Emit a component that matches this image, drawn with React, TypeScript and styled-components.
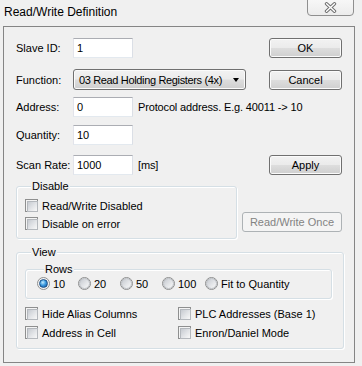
import React from "react";
import styled, { createGlobalStyle } from "styled-components";

const Global = createGlobalStyle`
  html, body { margin: 0; padding: 0; background: #f0f0f0; }
  body { font-family: "Liberation Sans", Arial, sans-serif; font-size: 11px; color: #000; }
  * { box-sizing: border-box; }
`;

const Window = styled.div`
  width: 362px;
  height: 366px;
  overflow: hidden;
  display: flex;
  flex-direction: column;
  background: #f0f0f0;
`;

const TitleBar = styled.div`
  flex: none;
  height: 26px;
  display: flex;
  justify-content: space-between;
  align-items: flex-start;
  padding-left: 4px;
`;

const Title = styled.div`
  font-size: 12px;
  line-height: 14px;
  margin-top: 5px;
`;

const CloseButton = styled.div`
  width: 47px;
  height: 17px;
  margin-right: 8px;
  margin-top: -1px;
  border: 1px solid #8f8f8f;
  border-radius: 0 0 4px 4px;
  background: linear-gradient(#f7f7f7, #ececec);
  display: flex;
  align-items: center;
  justify-content: center;
  padding-bottom: 1px;
`;

const Panel = styled.div`
  flex: none;
  margin-left: 3px;
  width: 352px;
  height: 337px;
  border: 1px solid #858585;
  padding: 11px 12px 0 12px;
  display: flex;
  flex-direction: column;
`;

const FormRow = styled.div<{ $mt: number; $h: number }>`
  display: flex;
  align-items: center;
  height: ${(p) => p.$h}px;
  margin-top: ${(p) => p.$mt}px;
`;

const FieldLabel = styled.span`
  flex: none;
  width: 57px;
`;

const TextBox = styled.input`
  flex: none;
  width: 60px;
  height: 20px;
  margin: 0;
  padding: 0 3px;
  border: 1px solid;
  border-color: #abadb3 #dbdfe6 #e3e9ef #e2e3ea;
  background: #fff;
  font-family: "Liberation Sans", Arial, sans-serif;
  font-size: 11px;
  color: #000;
  outline: none;
`;

const Hint = styled.span`
  margin-left: 5px;
  letter-spacing: -0.15px;
  white-space: nowrap;
`;

const PushButton = styled.button<{ $w: number; $mt?: number }>`
  flex: none;
  margin: ${(p) => p.$mt ?? 0}px 0 0 auto;
  width: ${(p) => p.$w}px;
  height: 20px;
  padding: 0;
  border: 1px solid #707070;
  border-radius: 3px;
  background: linear-gradient(#f2f2f2 0%, #ebebeb 48%, #dddddd 52%, #cfcfcf 100%);
  box-shadow: inset 0 0 0 1px #fbfbfb;
  font-family: "Liberation Sans", Arial, sans-serif;
  font-size: 11px;
  color: #000;
  &:disabled {
    border-color: #adb2b5;
    background: #f4f4f4;
    box-shadow: none;
    color: #838383;
  }
`;

const Combo = styled.div`
  flex: none;
  width: 173px;
  height: 21px;
  border: 1px solid #707070;
  border-radius: 3px;
  background: linear-gradient(#f2f2f2 0%, #ebebeb 48%, #dddddd 52%, #cfcfcf 100%);
  box-shadow: inset 0 0 0 1px #fbfbfb;
  display: flex;
  align-items: center;
  padding: 0 6px 0 5px;
`;

const ComboText = styled.span`
  flex: 1;
  white-space: nowrap;
  letter-spacing: -0.35px;
`;

const ComboArrow = styled.span`
  width: 0;
  height: 0;
  border-left: 3.5px solid transparent;
  border-right: 3.5px solid transparent;
  border-top: 4px solid #000;
`;

const Section = styled.div`
  display: flex;
  align-items: flex-start;
  gap: 5px;
  margin-top: 5px;
`;

const Group = styled.fieldset<{ $w: number; $mt?: number; $pad: string }>`
  flex: none;
  width: ${(p) => p.$w}px;
  margin: ${(p) => p.$mt ?? 0}px 0 0 0;
  padding: ${(p) => p.$pad};
  border: 1px solid #d5dfe5;
  border-radius: 3px;
  box-shadow: inset 1px 1px 0 #ffffff, 1px 1px 0 #ffffff;
  min-width: 0;
`;

const Legend = styled.legend<{ $ml: number }>`
  padding: 0 1px;
  margin-left: ${(p) => p.$ml}px;
  line-height: 13px;
  background: #f0f0f0;
`;

const Stack = styled.div`
  display: flex;
  flex-direction: column;
  gap: 5px;
`;

const CheckRow = styled.label`
  display: flex;
  align-items: center;
  gap: 4px;
  height: 13px;
  white-space: nowrap;
`;

const CheckBox = styled.span`
  flex: none;
  width: 13px;
  height: 13px;
  border: 1px solid #8e8f8f;
  background: #f4f4f4;
  padding: 1px;
  &::after {
    content: "";
    display: block;
    width: 9px;
    height: 9px;
    border: 1px solid #b4b8bd;
    background: linear-gradient(135deg, #c6cad0 0%, #e3e5e8 55%, #f8f8f8 100%);
  }
`;

const RadioRow = styled.div`
  display: flex;
  align-items: center;
  height: 13px;
`;

const RadioItem = styled.label<{ $w?: number }>`
  flex: none;
  width: ${(p) => (p.$w ? `${p.$w}px` : "auto")};
  display: flex;
  align-items: center;
  gap: 3px;
  white-space: nowrap;
`;

const RadioDot = styled.span<{ $on?: boolean }>`
  flex: none;
  width: 13px;
  height: 13px;
  border-radius: 50%;
  border: 1px solid #8e8f8f;
  background: #f4f4f4;
  display: flex;
  align-items: center;
  justify-content: center;
  &::after {
    content: "";
    display: block;
    width: ${(p) => (p.$on ? 7 : 9)}px;
    height: ${(p) => (p.$on ? 7 : 9)}px;
    border-radius: 50%;
    border: 1px solid ${(p) => (p.$on ? "#1b4f86" : "#b9bdc2")};
    background: ${(p) =>
      p.$on
        ? "radial-gradient(circle at 40% 35%, #c4ecff 0%, #3d9be0 45%, #0d4e9a 100%)"
        : "linear-gradient(135deg, #c6cad0 0%, #e3e5e8 55%, #f8f8f8 100%)"};
  }
`;

const OptionsGrid = styled.div`
  display: grid;
  grid-template-columns: 153px auto;
  row-gap: 6px;
  margin-top: 8px;
`;

const CloseGlyph = () => (
  <svg width="13" height="11" viewBox="0 0 13 11">
    <path d="M2.5 1.8 L10.5 9.2 M10.5 1.8 L2.5 9.2" stroke="#6f6f6f" strokeWidth="3.4" strokeLinecap="round" fill="none" />
    <path d="M2.5 1.8 L10.5 9.2 M10.5 1.8 L2.5 9.2" stroke="#ffffff" strokeWidth="1.4" strokeLinecap="round" fill="none" />
  </svg>
);

const Check = ({ label }: { label: string }) => (
  <CheckRow>
    <CheckBox />
    <span>{label}</span>
  </CheckRow>
);

const Radio = ({ label, on, w }: { label: string; on?: boolean; w?: number }) => (
  <RadioItem $w={w}>
    <RadioDot $on={on} />
    <span>{label}</span>
  </RadioItem>
);

export default function App() {
  return (
    <>
      <Global />
      <Window>
        <TitleBar>
          <Title>Read/Write Definition</Title>
          <CloseButton>
            <CloseGlyph />
          </CloseButton>
        </TitleBar>
        <Panel>
          <FormRow $mt={0} $h={20}>
            <FieldLabel>Slave ID:</FieldLabel>
            <TextBox defaultValue="1" />
            <PushButton $w={73}>OK</PushButton>
          </FormRow>
          <FormRow $mt={11} $h={21}>
            <FieldLabel>Function:</FieldLabel>
            <Combo>
              <ComboText>03 Read Holding Registers (4x)</ComboText>
              <ComboArrow />
            </Combo>
            <PushButton $w={73}>Cancel</PushButton>
          </FormRow>
          <FormRow $mt={7} $h={20}>
            <FieldLabel>Address:</FieldLabel>
            <TextBox defaultValue="0" />
            <Hint>Protocol address. E.g. 40011 -&gt; 10</Hint>
          </FormRow>
          <FormRow $mt={8} $h={20}>
            <FieldLabel>Quantity:</FieldLabel>
            <TextBox defaultValue="10" />
          </FormRow>
          <FormRow $mt={10} $h={20}>
            <FieldLabel>Scan Rate:</FieldLabel>
            <TextBox defaultValue="1000" />
            <Hint>[ms]</Hint>
            <PushButton $w={73}>Apply</PushButton>
          </FormRow>

          <Section>
            <Group $w={221} $pad="6px 8px 8px 8px">
              <Legend $ml={6}>Disable</Legend>
              <Stack>
                <Check label="Read/Write Disabled" />
                <Check label="Disable on error" />
              </Stack>
            </Group>
            <PushButton $w={100} $mt={32} disabled>
              Read/Write Once
            </PushButton>
          </Section>

          <Group $w={328} $mt={7} $pad="4px 10px 9px 8px">
            <Legend $ml={6}>View</Legend>
            <Group $w={307} $pad="1px 8px 8px 11px">
              <Legend $ml={7}>Rows</Legend>
              <RadioRow>
                <Radio label="10" on w={41} />
                <Radio label="20" w={42} />
                <Radio label="50" w={42} />
                <Radio label="100" w={43} />
                <Radio label="Fit to Quantity" />
              </RadioRow>
            </Group>
            <OptionsGrid>
              <Check label="Hide Alias Columns" />
              <Check label="PLC Addresses (Base 1)" />
              <Check label="Address in Cell" />
              <Check label="Enron/Daniel Mode" />
            </OptionsGrid>
          </Group>
        </Panel>
      </Window>
    </>
  );
}
